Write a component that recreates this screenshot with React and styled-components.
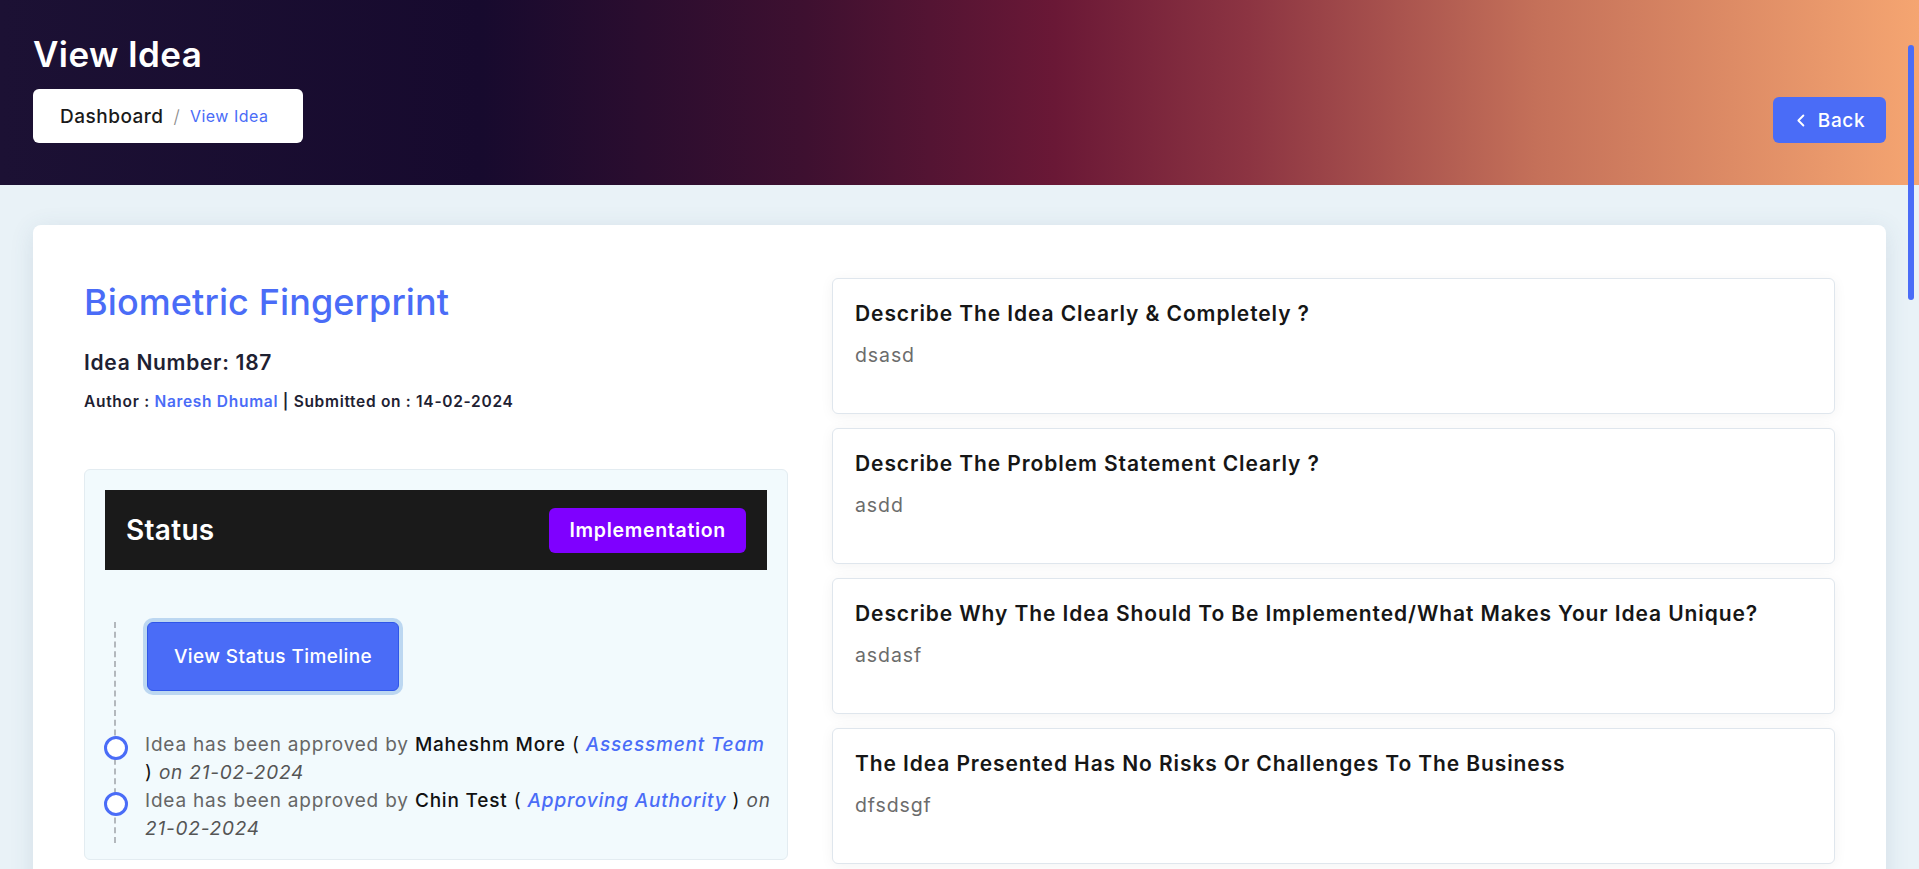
import React from 'react'
import styled, { createGlobalStyle } from 'styled-components'

const GlobalStyle = createGlobalStyle`
  * { box-sizing: border-box; }
  html, body { margin: 0; padding: 0; }
  body {
    font-family: Inter, "Noto Sans", sans-serif;
    background: #e9f2f7;
    color: #1a1a1a;
  }
  ::-webkit-scrollbar { width: 0; }
`

const blue = '#4a6cf7'

// ==============================================================================

const Header = styled.header`
  height: 185px;
  padding: 33px 33px 0 33px;
  display: flex;
  justify-content: space-between;
  align-items: flex-start;
  background: linear-gradient(90deg, #1c1134 0%, #170a2e 25%, #3e1030 42%, #6a1836 55%, #8c3442 65%, #c47059 80%, #f5a571 100%);
`

const HeaderLeft = styled.div`
  display: flex;
  flex-direction: column;
`

const PageTitle = styled.h1`
  margin: 0 0 14px 0;
  font-size: 35px;
  line-height: 42px;
  font-weight: 600;
  color: #fff;
  letter-spacing: 0.4px;
`

const Breadcrumb = styled.nav`
  width: 270px;
  height: 54px;
  background: #fff;
  border-radius: 6px;
  display: flex;
  align-items: center;
  padding-left: 27px;
  gap: 10px;
`

const Crumb = styled.span`
  color: ${p => (p.active ? blue : '#1a1a1a')};
  font-size: ${p => (p.active ? '16px' : '19px')};
  font-weight: ${p => (p.active ? 400 : 500)};
  letter-spacing: 0.5px;
`

const Slash = styled.span`
  color: #8a8a8a;
  font-size: 18px;
  font-weight: 300;
`

const BackButton = styled.button`
  margin-top: 64px;
  width: 113px;
  height: 46px;
  border: 0;
  border-radius: 6px;
  background: ${blue};
  color: #fff;
  font-family: inherit;
  font-size: 19px;
  font-weight: 500;
  letter-spacing: 0.6px;
  display: flex;
  align-items: center;
  justify-content: center;
  gap: 9px;
`

const ScrollThumb = styled.div`
  position: fixed;
  top: 45px;
  right: 5px;
  width: 6px;
  height: 255px;
  border-radius: 3px;
  background: ${blue};
`

const Wrapper = styled.main`
  padding: 40px 33px 60px 33px;
`

const MainCard = styled.section`
  background: #fff;
  border-radius: 8px;
  box-shadow: 0 4px 24px rgba(60, 90, 120, 0.12);
  padding: 53px 51px 60px 51px;
  display: grid;
  grid-template-columns: 704px 1003px;
  gap: 44px;
  align-items: start;
`

const LeftCol = styled.div`
  display: flex;
  flex-direction: column;
`

const IdeaTitle = styled.h2`
  margin: 0 0 24px 0;
  font-size: 36px;
  line-height: 48px;
  font-weight: 500;
  color: ${blue};
  letter-spacing: 0.1px;
`

const IdeaNumber = styled.h3`
  margin: 0 0 16px 0;
  font-size: 21px;
  line-height: 26px;
  font-weight: 600;
  color: #1e2132;
  letter-spacing: 0.7px;
`

const Meta = styled.p`
  margin: 0 0 58px 0;
  font-size: 15.5px;
  font-weight: 600;
  color: #1e2132;
  letter-spacing: 0.7px;
`

const Link = styled.span`
  color: ${blue};
`

const StatusPanel = styled.div`
  background: #f2fafd;
  border: 1px solid #e3ecf1;
  border-radius: 6px;
  padding: 20px 20px 16px 20px;
`

const StatusBar = styled.div`
  height: 80px;
  background: #1a1a1a;
  display: flex;
  align-items: center;
  justify-content: space-between;
  padding: 0 21px;
`

const StatusLabel = styled.span`
  color: #fff;
  font-size: 28px;
  font-weight: 600;
  letter-spacing: 0.3px;
`

const Badge = styled.span`
  background: #7f00ff;
  color: #fff;
  border-radius: 6px;
  padding: 0 20px;
  height: 45px;
  display: flex;
  align-items: center;
  font-size: 19.5px;
  font-weight: 600;
  letter-spacing: 0.7px;
`

const Timeline = styled.div`
  margin: 52px 0 0 9px;
  padding: 0 0 0 52px;
  border-left: 2px dashed #b3b8bd;
`

const TimelineButton = styled.button`
  width: 252px;
  height: 69px;
  margin-left: -21px;
  margin-bottom: 40px;
  border: 1px solid #2f56e8;
  border-radius: 6px;
  background: ${blue};
  box-shadow: 0 0 0 4px #bcd7f1;
  color: #fff;
  font-family: inherit;
  font-size: 19px;
  font-weight: 500;
  letter-spacing: 0.4px;
`

const Item = styled.div`
  position: relative;
  margin-left: -23px;
  margin-right: -5px;
  font-size: 19px;
  line-height: 28px;
  letter-spacing: 0.8px;
  color: #666;

  &::before {
    content: '';
    position: absolute;
    left: -41px;
    top: 5px;
    width: 18px;
    height: 18px;
    border: 3.5px solid ${blue};
    border-radius: 50%;
    background: #fff;
  }
`

const Name = styled.span`
  color: #111;
  font-weight: 500;
`

const Role = styled.em`
  color: ${blue};
  font-weight: 500;
`

const Paren = styled.span`
  color: #111;
`

const Date = styled.em`
  color: #555;
`

const RightCol = styled.div`
  display: flex;
  flex-direction: column;
  gap: 14px;
`

const QCard = styled.div`
  min-height: 136px;
  border: 1px solid #dfe6ed;
  border-radius: 6px;
  background: #fff;
  box-shadow: 0 2px 14px rgba(0, 0, 0, 0.05);
  padding: 20px 22px 24px 22px;
`

const QTitle = styled.h4`
  margin: 0 0 14px 0;
  font-size: 21px;
  line-height: 30px;
  font-weight: 600;
  color: #161616;
  letter-spacing: 0.9px;
`

const QAnswer = styled.p`
  margin: 0;
  font-size: 19.5px;
  color: #6c6c6c;
  letter-spacing: 0.9px;
`

const ChevronLeft = () => (
  <svg width="15" height="15" viewBox="0 0 24 24" fill="none" stroke="#fff" strokeWidth="3" strokeLinecap="round" strokeLinejoin="round">
    <path d="M15 4l-8 8 8 8" />
  </svg>
)

const questions = [
  { q: 'Describe The Idea Clearly & Completely ?', a: 'dsasd' },
  { q: 'Describe The Problem Statement Clearly ?', a: 'asdd' },
  { q: 'Describe Why The Idea Should To Be Implemented/What Makes Your Idea Unique?', a: 'asdasf' },
  { q: 'The Idea Presented Has No Risks Or Challenges To The Business', a: 'dfsdsgf' },
  { q: 'Describe The Expected Benefits Of The Idea ?', a: 'sdfsdf' },
  { q: 'Who Are The Stakeholders Impacted By The Idea ?', a: 'asdasd' },
  { q: 'Estimated Cost Of Implementation', a: '1200' },
  { q: 'Estimated Time Of Implementation', a: '3 months' },
  { q: 'Resources Required For Implementation', a: 'sdfsd' },
  { q: 'Is The Idea Scalable Across Departments ?', a: 'yes' },
  { q: 'Describe Any Dependencies Of The Idea', a: 'dfgdfg' },
  { q: 'How Will Success Be Measured ?', a: 'asdas' },
  { q: 'Additional Comments', a: 'sdfsdf' },
]

export default function App() {
  return (
    <>
      <GlobalStyle />
      <ScrollThumb />
      <Header>
        <HeaderLeft>
          <PageTitle>View Idea</PageTitle>
          <Breadcrumb>
            <Crumb>Dashboard</Crumb>
            <Slash>/</Slash>
            <Crumb active>View Idea</Crumb>
          </Breadcrumb>
        </HeaderLeft>
        <BackButton>
          <ChevronLeft />
          Back
        </BackButton>
      </Header>

      <Wrapper>
        <MainCard>
          <LeftCol>
            <IdeaTitle>Biometric Fingerprint</IdeaTitle>
            <IdeaNumber>Idea Number: 187</IdeaNumber>
            <Meta>
              Author : <Link>Naresh Dhumal</Link> | Submitted on : 14-02-2024
            </Meta>

            <StatusPanel>
              <StatusBar>
                <StatusLabel>Status</StatusLabel>
                <Badge>Implementation</Badge>
              </StatusBar>
              <Timeline>
                <TimelineButton>View Status Timeline</TimelineButton>
                <Item>
                  Idea has been approved by <Name>Maheshm More</Name> <Paren>(</Paren>{' '}
                  <Role>Assessment Team</Role> <Paren>)</Paren> <Date>on 21-02-2024</Date>
                </Item>
                <Item>
                  Idea has been approved by <Name>Chin Test</Name> <Paren>(</Paren>{' '}
                  <Role>Approving Authority</Role> <Paren>)</Paren> <Date>on 21-02-2024</Date>
                </Item>
              </Timeline>
            </StatusPanel>
          </LeftCol>

          <RightCol>
            {questions.map(item => (
              <QCard key={item.q}>
                <QTitle>{item.q}</QTitle>
                <QAnswer>{item.a}</QAnswer>
              </QCard>
            ))}
          </RightCol>
        </MainCard>
      </Wrapper>
    </>
  )
}
